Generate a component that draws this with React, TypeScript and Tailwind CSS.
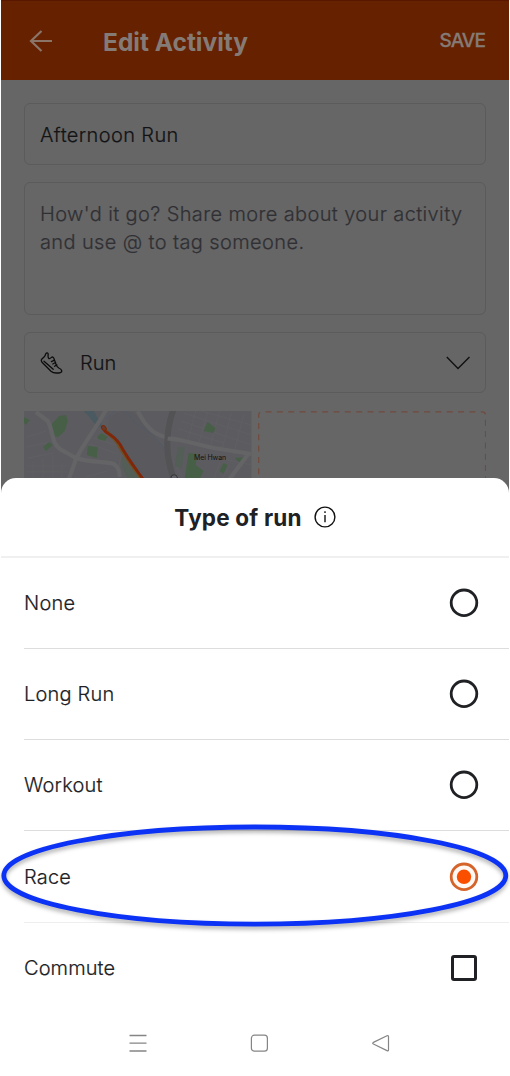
import React from 'react';

const options = [
  { label: 'None' },
  { label: 'Long Run' },
  { label: 'Workout' },
  { label: 'Race', selected: true },
];

function Radio({ selected }: { selected?: boolean }) {
  return (
    <svg width="30" height="30" viewBox="0 0 30 30" fill="none">
      <circle cx="15" cy="14.8" r="12.8" fill={selected ? '#fff8f3' : '#fff'} stroke={selected ? '#d5642a' : '#202124'} strokeWidth="2.8" />
      {selected && <circle cx="15" cy="14.8" r="7.2" fill="#fb4f00" />}
    </svg>
  );
}

function Shoe() {
  return (
    <svg width="24" height="24" viewBox="0 0 24 24" fill="none" stroke="#0c0c0c" strokeWidth="1.3" strokeLinecap="round" strokeLinejoin="round">
      <path d="M1.8 8.2C1 9.3 1.2 10.2 2 11.2L11 20.2C12.5 21.6 14.2 22 16.4 22H19C20.9 22 21.9 21 21.7 19.7C21.5 18.5 20.4 17.7 18.8 17C17.5 16.3 16.8 15.5 16.1 13.6L14 7.6C13.6 6.4 12.6 5.6 11.6 6.3C10.8 7 9.6 8.1 8.8 7.4C7.7 6.4 8 4.6 8.2 3.3C8.2 1.7 6.6 1.5 5.9 2.6L5 4.8C4.4 6.2 2.8 6.9 1.8 8.2Z" />
      <path d="M4 10.2L13.2 18.2" />
      <path d="M11.4 10.6L14.4 9.2M12.8 13L15.6 11.5M14.5 15.2L16.9 13.9" />
    </svg>
  );
}

function RouteMap() {
  return (
    <svg width="228" height="84" viewBox="0 0 228 84" fill="none">
      <rect width="228" height="84" fill="#5c5c60" />
      <g stroke="#616165" strokeWidth="0.8">
        <path d="M3 26L22 20M2 36L26 31M4 47L30 42M2 55H42M2 61H44M9 50V68M19 47V68M29 44V68M38 52V68M62 66L84 60M66 33L94 43M70 27L92 34M95 56L99 34" />
        <path d="M160 2L228 24M158 10L228 34M164 -4L228 14M172 0L164 32M184 2L174 36M196 0L186 38M208 2L198 40M220 4L210 44M155 18L200 32M150 50L158 66M196 52L190 68M206 54L199 68M180 44L228 54" />
      </g>
      <path d="M85 8C95 -4 108 -2 116 8L126 20L140 36C146 47 145 58 148 68H124C110 55 98 34 84 20Z" fill="#59595e" />
      <path d="M82 8L92 -1M62 0L78 14L94 27L106 47L123 68M101 0L114 14L128 23L139 35L145 48L147 68" stroke="#515a67" strokeWidth="1" />
      <path d="M60 0H70L79 16L73 15Z" fill="#4a5a60" />
      <g fill="#475f47">
        <path d="M35 5L42 4L44 10L41 20L34 26L27 24L28 13Z" />
        <path d="M0 6L6 9L2 14L0 12Z" />
        <path d="M19 36L25 31L29 34L22 40Z" />
        <path d="M74 25L78 22L84 26L81 30L74 28Z" />
        <path d="M64 35L74 36L73 47L63 44Z" />
        <path d="M184 11L192 17L190 22L180 20Z" />
        <path d="M165 42L174 43L172 54L180 60L176 68H161L163 54Z" />
        <path d="M211 47L224 46L219 54Z" />
        <path d="M200 52L204 54L200 63L196 60Z" />
      </g>
      <path d="M154 36L161 36L158 58L151 55ZM98 45L107 57L117 68H104L98 55Z" fill="#535e56" />
      <path d="M12 1L24 10C30 22 27 31 36 38L50 46C64 52 80 50 90 53Q96 57 96 66M82 -1C70 22 54 39 50 54L45 68M114 0C123 18 132 26 152 28L190 37L228 43M224 44L206 68" stroke="#646466" strokeWidth="4.2" />
      <path d="M149.5 -1C142 21 141 42 150 68" stroke="#535356" strokeWidth="6" />
      <path d="M144 27.5L154 29" stroke="#646466" strokeWidth="4" />
      <path d="M79 15C82 23 87 22 94 32C101 46 110 56 119 69" stroke="#6e5025" strokeWidth="3.7" />
      <path d="M79 15C80 24 87 20 96 33C104 48 112 58 120 69" stroke="#802609" strokeWidth="2.8" />
      <ellipse cx="80" cy="17" rx="2" ry="2.8" transform="rotate(-38 80 17)" fill="#653e2c" stroke="#802609" strokeWidth="1" />
      <circle cx="150.5" cy="67" r="3.2" fill="#616166" stroke="#333" />
      <text x="170.5" y="49.4" fill="#111" fontSize="7" fontWeight="400" textLength="32" fontFamily="Inter, sans-serif">Mei Hwan</text>
    </svg>
  );
}

export default function App() {
  return (
    <div className="h-[1076px] w-[510px] overflow-hidden bg-white px-px font-['Inter',sans-serif] font-light text-[#202124]">
      <div className="relative flex h-full flex-col bg-[#666666]">
        <div className="h-[478px] shrink-0 overflow-hidden">
          <header className="flex h-[80px] items-center border-t border-[#5a1700] bg-[#662100] pr-[24px] pl-[27px] text-[#857b76]">
            <svg className="mt-px" width="26" height="26" viewBox="0 0 26 26" fill="none" stroke="#8b7568" strokeWidth="2.2">
              <path d="M13.5 3L3 13L13.5 23M3.3 13H24" />
            </svg>
            <h1 className="mt-[2px] ml-[49px] text-[24.5px] leading-7 font-bold whitespace-nowrap">Edit Activity</h1>
            <button className="mt-[2px] ml-auto text-[19px] font-medium tracking-[-0.9px] [-webkit-text-stroke:0.3px]">SAVE</button>
          </header>
          <main className="flex flex-col px-[23px] pt-[23px] [-webkit-text-stroke:0.2px]">
            <div className="flex h-[62px] items-center rounded-[6px] border border-[#5b5b5c] px-[15px] pt-px text-[20px] tracking-[0.38px] text-[#131315]">
              Afternoon Run
            </div>
            <div className="mt-[17px] h-[133px] rounded-[6px] border border-[#5b5b5c] px-[15px] pt-[17px] text-[20px] leading-[28px] tracking-[0.38px] whitespace-nowrap text-[#303034]">
              How'd it go? Share more about your activity<br />and use @ to tag someone.
            </div>
            <div className="mt-[17px] flex h-[61px] items-center rounded-[6px] border border-[#5b5b5c] pr-[14px] pl-[15px] text-[20px] text-[#131315]">
              <Shoe />
              <span className="ml-4">Run</span>
              <svg className="ml-auto" width="26" height="16" viewBox="0 0 26 16" fill="none" stroke="#111" strokeWidth="1.4">
                <path d="M1.8 2L13 13.6L24.5 2" />
              </svg>
            </div>
            <div className="mt-[18px] flex gap-[6px]">
              <RouteMap />
              <svg width="229" height="84" viewBox="0 0 229 84" fill="none" stroke="#724a3e" strokeWidth="1.2">
                <path d="M.7 84V4Q.7.7 4 .7H224.5Q228 .7 228 4V84" strokeDasharray="6 5.35" strokeDashoffset="2" />
              </svg>
            </div>
          </main>
        </div>

        <section className="flex grow flex-col rounded-t-[15px] bg-white">
          <div className="flex h-[80px] shrink-0 items-center justify-center gap-3 border-b-2 border-[#f0f0f0]">
            <h2 className="pt-[2px] text-[22.5px] font-bold tracking-[0.18px]">Type of run</h2>
            <svg width="22" height="22" viewBox="0 0 22 22" fill="none" stroke="#111" strokeWidth="1.4">
              <circle cx="11" cy="11" r="9.9" />
              <path d="M11 9V16.2M11 5.2V7" />
            </svg>
          </div>
          {options.map((option) => (
            <div key={option.label} className="ml-[23px] flex h-[91px] shrink-0 items-center justify-between border-b border-[#dddddd] pr-[30px] text-[20px] last-of-type:border-b-0 nth-[5]:h-[92px] nth-[5]:border-[#eeeeee] nth-[5]:pt-px">
              <span className="tracking-[0.2px] [-webkit-text-stroke:0.2px]">{option.label}</span>
              <Radio selected={option.selected} />
            </div>
          ))}
          <div className="ml-[23px] flex h-[90px] shrink-0 items-center justify-between pr-[32px] text-[20px]">
            <span className="tracking-[0.1px] [-webkit-text-stroke:0.2px]">Commute</span>
            <span className="h-[26px] w-[26px] rounded-[3px] border-[3px] border-[#202124]" />
          </div>
          <nav className="mt-[19px] flex justify-between pr-[117px] pl-[126px]">
            <svg width="22" height="22" viewBox="0 0 22 22" fill="none" stroke="#858585" strokeWidth="1.3">
              <path d="M2.5 3.5H19.5M2.5 11.2H19.5M2.5 19H19.5" />
            </svg>
            <svg width="22" height="22" viewBox="0 0 22 22" fill="none" stroke="#858585" strokeWidth="1.2">
              <rect x="2.4" y="3.2" width="16" height="16" rx="3" />
            </svg>
            <svg width="22" height="22" viewBox="0 0 22 22" fill="none" stroke="#858585" strokeWidth="1.2" strokeLinejoin="round">
              <path d="M3.4 10.4L17 3.8Q18.5 3.2 18.5 4.7V17.7Q18.5 19.3 17 18.6L3.4 12Q2 11.2 3.4 10.4Z" />
            </svg>
          </nav>
        </section>
        <svg className="pointer-events-none absolute top-[818px] left-0 drop-shadow-[0_3px_2px_rgba(0,0,0,0.3)]" width="508" height="120" viewBox="0 0 508 120" fill="none">
          <ellipse cx="253.8" cy="57.6" rx="251" ry="48.6" stroke="#0b32f5" strokeWidth="4.8" />
        </svg>
      </div>
    </div>
  );
}
